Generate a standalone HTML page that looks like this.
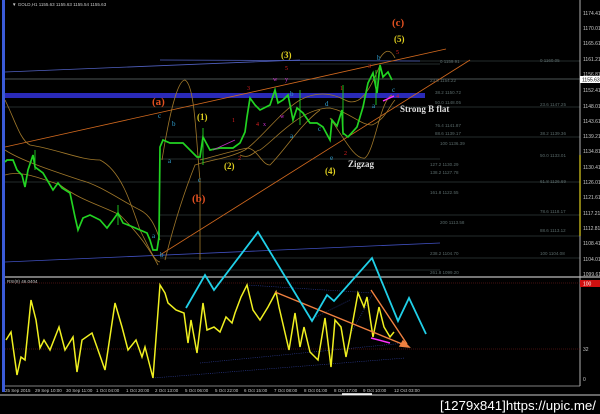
<!DOCTYPE html>
<html><head><meta charset="utf-8"><style>
html,body{margin:0;padding:0;background:#000;}
svg{display:block;font-family:"Liberation Sans",sans-serif;}
.ax{fill:#c8c8c8;font-size:5px;}
.fb{fill:#5a6a6a;font-size:4.5px;}
.tm{fill:#c8c8c8;font-size:4.5px;}
.w{font-family:"Liberation Serif",serif;font-weight:bold;}
</style></head><body>
<svg width="600" height="414" viewBox="0 0 600 414" xmlns="http://www.w3.org/2000/svg">
<rect width="600" height="414" fill="#000"/>
<rect x="2" y="0" width="3" height="392" fill="#3b5bd8"/>
<text x="12" y="6" class="tm" fill="#ccc">▼ GOLD,H1  1155.63 1155.63 1155.54 1155.63</text>
<g stroke="#4a5a5a" stroke-width="0.6">
<line x1="400" y1="61" x2="580" y2="61"/>
<line x1="300" y1="64" x2="440" y2="64"/>
<line x1="5" y1="79" x2="580" y2="79" stroke="#9aa"/>
<line x1="5" y1="107" x2="580" y2="107"/>
<line x1="160" y1="137" x2="580" y2="137"/>
<line x1="160" y1="159" x2="440" y2="159"/>
<line x1="5" y1="182" x2="580" y2="182"/>
<line x1="160" y1="215" x2="580" y2="215"/>
<line x1="160" y1="236" x2="580" y2="236"/>
<line x1="160" y1="258" x2="580" y2="258"/>
<line x1="160" y1="270" x2="440" y2="270"/>
</g>
<rect x="5" y="93" width="420" height="5" fill="#2a2ab8"/>
<line x1="5" y1="72" x2="300" y2="60" stroke="#5060c0" stroke-width="0.8"/>
<line x1="160" y1="60" x2="420" y2="61" stroke="#5060c0" stroke-width="0.8"/>
<line x1="5" y1="262" x2="440" y2="243" stroke="#4050c0" stroke-width="0.8"/>
<line x1="5" y1="147" x2="446" y2="49" stroke="#d2691e" stroke-width="0.8"/>
<line x1="160" y1="255" x2="470" y2="60" stroke="#d2691e" stroke-width="0.8"/>
<g fill="none" stroke="#a0782a" stroke-width="0.8">
<path d="M5,100 C15,120 20,140 30,145 C60,150 80,160 100,160 C120,170 130,200 140,230 C150,250 155,262 160,262"/>
<path d="M5,150 C20,160 50,170 80,180 C100,185 120,200 140,210 C150,215 155,225 160,240"/>
<path d="M5,175 C20,170 40,178 60,185 C80,200 100,205 120,215 C140,235 150,250 158,265"/>
<path d="M162,160 C170,110 178,80 185,80 C195,85 196,140 200,180 L200,260"/>
<path d="M165,260 C175,220 185,190 195,165 C210,160 230,158 245,150 C260,140 280,112 300,100 C315,92 330,92 345,100 C360,108 370,90 380,65"/>
<path d="M200,160 C220,155 235,150 248,148 C258,150 262,165 270,165 C285,150 300,125 320,110"/>
<path d="M240,155 C250,160 255,150 260,150 C275,140 300,108 330,108 C350,112 360,125 372,125 C385,120 390,105 395,100"/>
<path d="M330,118 C345,140 355,160 365,158 C375,150 380,100 392,95"/>
<path d="M380,58 C385,50 390,48 395,58"/>
</g>
<polyline fill="none" stroke="#22d322" stroke-width="1.7" points="5,162 7,160 13,160 17,170 22,175 25,187 28,170 33,155 35,167 43,173 53,190 58,183 62,188 70,193 75,217 78,230 83,218 90,215 100,220 107,228 113,220 118,213 123,223 133,227 147,233 150,240 153,250 157,250 159,237 160,147 163,140 170,143 183,143 190,150 197,157 200,157 203,137 210,150 220,148 233,148 240,143 245,132 247,117 250,98 255,105 260,110 270,105 275,90 278,103 283,100 288,95 293,120 297,108 303,113 310,123 317,123 323,127 330,140 332,120 337,126 342,110 343,133 348,137 357,127 363,107 368,83 373,73 377,93 380,65 383,77 388,72 392,80"/>
<g stroke="#22d322" stroke-width="0.9">
<line x1="35" y1="150" x2="35" y2="170"/><line x1="118" y1="205" x2="118" y2="225"/><line x1="203" y1="128" x2="203" y2="165"/>
<line x1="300" y1="90" x2="300" y2="125"/><line x1="343" y1="85" x2="343" y2="135"/><line x1="376" y1="70" x2="376" y2="105"/>
</g>
<line x1="213" y1="150" x2="235" y2="140" stroke="#c030c0" stroke-width="0.8"/>
<g class="w" font-size="9">
<text x="152" y="105" fill="#e05020" font-size="11">(a)</text>
<text x="192" y="202" fill="#e05020" font-size="11">(b)</text>
<text x="392" y="26" fill="#e05020" font-size="11">(c)</text>
<text x="197" y="120" fill="#e0d020">(1)</text>
<text x="224" y="169" fill="#e0d020">(2)</text>
<text x="281" y="58" fill="#e0d020">(3)</text>
<text x="325" y="174" fill="#e0d020">(4)</text>
<text x="394" y="42" fill="#e0d020">(5)</text>
<text x="348" y="167" fill="#dddddd">Zigzag</text>
<text x="400" y="112" fill="#dddddd">Strong B flat</text>
</g>
<g font-size="7" font-family="Liberation Serif,serif">
<text x="158" y="118" fill="#30a0d0">c</text><text x="172" y="126" fill="#30a0d0">b</text>
<text x="168" y="163" fill="#30a0d0">a</text><text x="198" y="182" fill="#30a0d0">c</text>
<text x="152" y="238" fill="#30a0d0">a</text><text x="160" y="257" fill="#30a0d0">b</text>
<text x="290" y="96" fill="#30a0d0">b</text><text x="290" y="138" fill="#30a0d0">a</text>
<text x="318" y="131" fill="#30a0d0">c</text><text x="325" y="106" fill="#30a0d0">d</text>
<text x="330" y="160" fill="#30a0d0">e</text><text x="377" y="60" fill="#30a0d0">b</text>
<text x="372" y="108" fill="#30a0d0">a</text><text x="392" y="92" fill="#30a0d0">c</text>
<text x="232" y="122" fill="#e02020" font-size="6">1</text><text x="247" y="90" fill="#e02020" font-size="6">3</text>
<text x="256" y="126" fill="#e02020" font-size="6">4</text><text x="285" y="70" fill="#e02020" font-size="6">5</text>
<text x="238" y="160" fill="#e02020" font-size="6">2</text><text x="340" y="90" fill="#e02020" font-size="6">1</text>
<text x="344" y="155" fill="#e02020" font-size="6">2</text><text x="368" y="68" fill="#e02020" font-size="6">3</text>
<text x="396" y="98" fill="#e02020" font-size="6">4</text><text x="396" y="54" fill="#e02020" font-size="6">5</text>
<text x="273" y="81" fill="#d030d0" font-size="6">w</text><text x="285" y="81" fill="#d030d0" font-size="6">y</text>
<text x="263" y="126" fill="#d030d0" font-size="6">x</text><text x="280" y="118" fill="#d030d0" font-size="6">w</text>
</g>
<line x1="383" y1="101" x2="394" y2="96" stroke="#ff30ff" stroke-width="1.5"/>
<g class="fb">
<text x="440" y="63">0 1159.91</text><text x="540" y="62">0 1160.05</text>
<text x="430" y="82">23.6 1154.22</text><text x="435" y="94">38.2 1150.72</text>
<text x="435" y="104">50.0 1148.05</text><text x="540" y="106">23.6 1147.25</text>
<text x="435" y="127">76.4 1141.87</text><text x="435" y="135">88.6 1139.17</text>
<text x="540" y="135">38.2 1139.36</text><text x="440" y="145">100 1136.39</text>
<text x="540" y="157">50.0 1133.01</text><text x="430" y="166">127.2 1130.29</text>
<text x="430" y="174">138.2 1127.78</text><text x="540" y="183">61.8 1126.69</text>
<text x="430" y="194">161.8 1122.55</text><text x="540" y="213">78.6 1118.17</text>
<text x="440" y="224">200 1113.58</text><text x="540" y="232">88.6 1113.12</text>
<text x="430" y="255">238.2 1104.70</text><text x="540" y="255">100 1104.08</text>
<text x="430" y="274">261.8 1099.20</text>
</g>
<line x1="580" y1="0" x2="580" y2="386" stroke="#ddd" stroke-width="0.8"/>
<line x1="580" y1="155" x2="580" y2="236" stroke="#e0d020" stroke-width="1.2"/>
<g class="ax">
<text x="583" y="15">1174.41</text><text x="583" y="30">1170.01</text><text x="583" y="45">1165.61</text>
<text x="583" y="61">1161.21</text><text x="583" y="76">1156.81</text><text x="583" y="92">1152.41</text>
<text x="583" y="108">1148.01</text><text x="583" y="123">1143.61</text><text x="583" y="138">1139.21</text>
<text x="583" y="153">1134.81</text><text x="583" y="169">1130.41</text><text x="583" y="184">1126.01</text>
<text x="583" y="199">1121.61</text><text x="583" y="215">1117.21</text><text x="583" y="230">1112.81</text>
<text x="583" y="245">1108.41</text><text x="583" y="261">1104.01</text><text x="583" y="276">1099.61</text>
</g>
<rect x="580" y="76" width="20" height="7" fill="#fff"/><text x="582" y="81.5" font-size="5" fill="#000">1155.63</text>
<line x1="5" y1="277" x2="600" y2="277" stroke="#bbb" stroke-width="1.2"/>
<text x="7" y="283" class="tm">RSI(8) 46.0404</text>
<line x1="5" y1="283" x2="580" y2="283" stroke="#8a2020" stroke-width="0.5" stroke-dasharray="1,1"/>
<line x1="5" y1="349" x2="580" y2="349" stroke="#8a2020" stroke-width="0.5" stroke-dasharray="1,1"/>
<rect x="580" y="280" width="20" height="7" fill="#d01010"/>
<text x="583" y="285.5" font-size="5" fill="#fff">100</text>
<text x="583" y="351" class="ax">32</text><text x="583" y="381" class="ax">0</text>
<g stroke="#3040a0" stroke-width="0.6" stroke-dasharray="1,1.2" fill="none">
<line x1="153" y1="378" x2="405" y2="358"/><line x1="200" y1="363" x2="405" y2="343"/>
<line x1="247" y1="285" x2="372" y2="293"/><line x1="350" y1="335" x2="372" y2="295"/>
<line x1="310" y1="320" x2="350" y2="300"/>
</g>
<polyline fill="none" stroke="#f0f020" stroke-width="1.5" points="6,340 11,332 17,375 21,357 25,360 31,300 36,320 40,348 44,340 50,350 59,327 65,350 73,337 77,372 82,340 92,333 98,350 105,370 115,303 122,327 128,350 136,340 142,357 145,347 153,378 160,285 165,293 168,303 176,310 184,313 188,343 191,320 197,353 203,303 207,330 214,327 220,332 226,317 232,323 235,313 241,297 247,285 253,310 260,320 268,307 276,292 279,307 289,350 295,313 300,347 304,327 310,352 318,360 325,318 331,367 335,320 341,327 346,357 350,337 358,293 364,307 367,297 373,337 379,307 384,327 390,337 394,332"/>
<g stroke="#f08040" stroke-width="1.4" fill="#f08040">
<line x1="275" y1="292" x2="407" y2="346"/>
<line x1="371" y1="290" x2="407" y2="344"/>
<polygon points="409,347 400,346 403,341"/>
</g>
<line x1="371" y1="338" x2="390" y2="343" stroke="#ff30ff" stroke-width="1.5"/>
<polyline fill="none" stroke="#20d0e8" stroke-width="1.8" points="186,308 205,275 214,290 258,232 312,321 327,295 334,301 372,258 398,321 409,298 426,334"/>
<line x1="5" y1="386" x2="580" y2="386" stroke="#aaa" stroke-width="0.8"/>
<g class="tm">
<text x="5" y="392">25 Sep 2015</text><text x="35" y="392">29 Sep 10:00</text><text x="66" y="392">30 Sep 11:00</text>
<text x="96" y="392">1 Oct 04:00</text><text x="126" y="392">1 Oct 20:00</text><text x="155" y="392">2 Oct 13:00</text>
<text x="185" y="392">5 Oct 06:00</text><text x="215" y="392">5 Oct 22:00</text><text x="244" y="392">6 Oct 15:00</text>
<text x="274" y="392">7 Oct 08:00</text><text x="304" y="392">8 Oct 01:00</text><text x="334" y="392">8 Oct 17:00</text>
<text x="363" y="392">9 Oct 10:00</text><text x="394" y="392">12 Oct 03:00</text>
</g>
<line x1="0" y1="395" x2="600" y2="395" stroke="#ccc" stroke-width="1"/>
<line x1="342" y1="394" x2="372" y2="394" stroke="#fff" stroke-width="1.5"/>
<text x="596" y="410" text-anchor="end" fill="#fff" font-size="13" font-family="Liberation Sans,sans-serif" textLength="156" lengthAdjust="spacingAndGlyphs">[1279x841]https://upic.me/</text>
</svg>
</body></html>
